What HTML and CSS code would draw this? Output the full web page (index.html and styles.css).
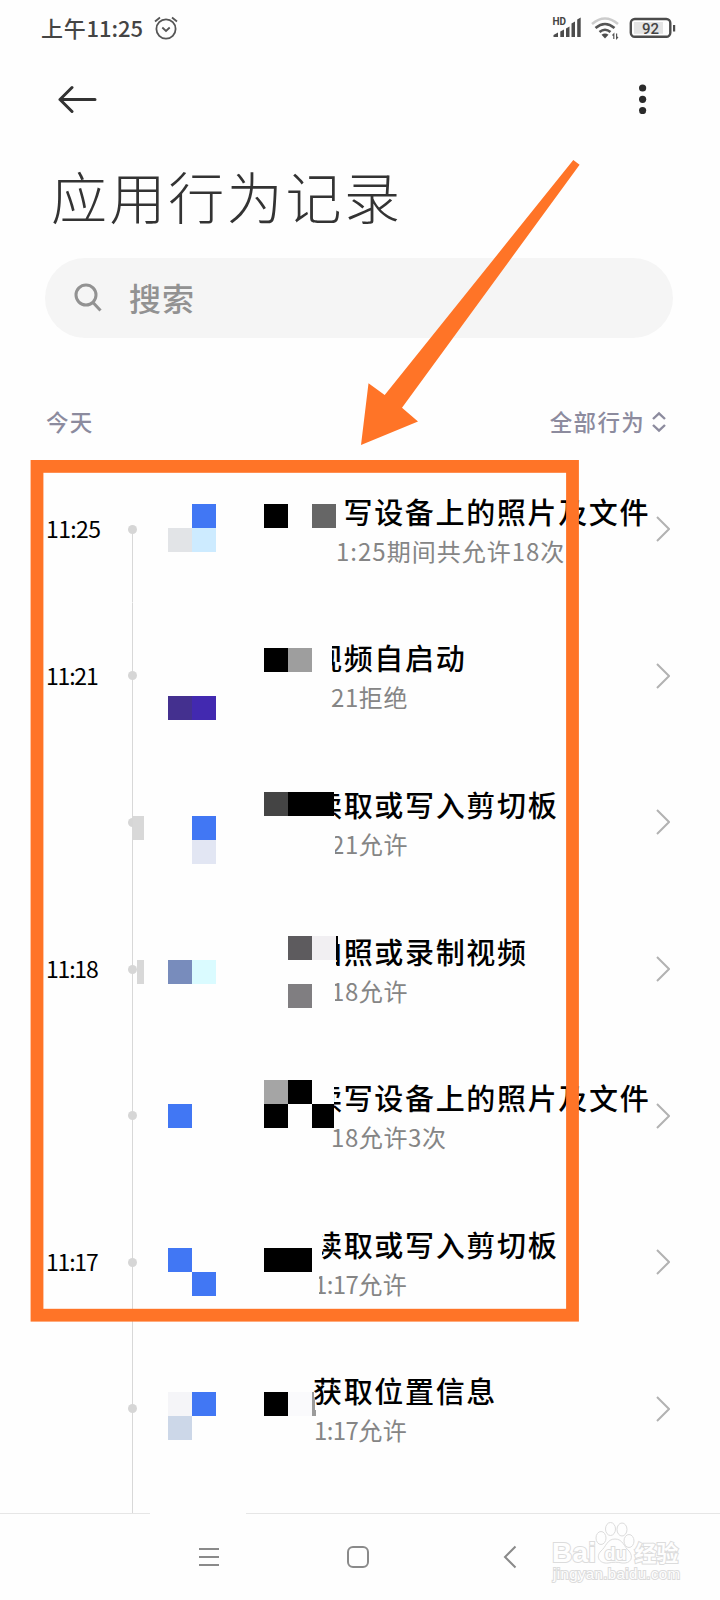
FILE: index.html
```html
<!DOCTYPE html>
<html lang="zh-CN">
<head>
    <meta charset="UTF-8">
    <meta name="viewport" content="width=device-width, initial-scale=1.0">
    <title>应用行为记录</title>
    <link rel="stylesheet" href="styles.css">
</head>
<body>
    <div class="phone">
        <div class="status-bar">
            <span class="clock">上午<span class="digits">11:25</span></span>
            <svg class="alarm" width="24" height="24" viewBox="0 0 24 24">
                <circle cx="12" cy="13" r="9.6"/>
                <path d="M1 5.5 L6 1.5 M23 5.5 L18 1.5 M8.3 11.5 L12 15 L15.7 11.5"/>
            </svg>
            <svg class="signals" width="126" height="26" viewBox="0 0 126 26">
                <text x="0.5" y="9.5" class="hd">HD</text>
                <path class="fill" d="M1.5 22 V20 L6 17.5 V22 Z M8.3 16.5 L12 14.5 V22 H8.3 Z M14 13.5 L17.5 11.5 V22 H14 Z M19.5 8.5 L23 6.5 V22 H19.5 Z M25.2 4.5 L28.7 2.5 V22 H25.2 Z"/>
                <path class="wifi faint" d="M40 9 Q53 -2 66 9"/>
                <path class="wifi" d="M43.5 13 Q53 5 62.5 13 M47.5 17 Q53 12.5 58.5 17"/>
                <path class="fill" d="M49.5 19.8 Q53 17 56.5 19.8 L53 23.5 Z"/>
                <path class="thin" d="M61.8 24 V19 L60.5 20.5 M64.6 18.5 V23.5 L66 22"/>
                <rect class="battery" x="78.8" y="4" width="39.5" height="17.8" rx="4"/>
                <rect class="level" x="82" y="7" width="29" height="11.8"/>
                <rect class="fill" x="121" y="10" width="2.2" height="6.5"/>
                <text x="90" y="18.5" class="percent">92</text>
            </svg>
        </div>

        <div class="toolbar">
            <svg width="40" height="30" viewBox="0 0 40 30">
                <path d="M14 3.5 L2 15.5 L14 27.5 M2 15.5 H37"/>
            </svg>
            <svg class="more" width="8" height="30" viewBox="0 0 8 30">
                <circle cx="3.6" cy="4" r="3.6"/>
                <circle cx="3.6" cy="15.3" r="3.6"/>
                <circle cx="3.6" cy="26.6" r="3.6"/>
            </svg>
        </div>

        <h1>应用行为记录</h1>

        <div class="search">
            <svg width="28" height="30" viewBox="0 0 28 30">
                <circle cx="12" cy="12" r="10"/>
                <path d="M19 19.5 L26.5 27.5"/>
            </svg>
            <span>搜索</span>
        </div>

        <div class="filter">
            <span>今天</span>
            <span class="all">全部行为</span>
            <svg width="16" height="22" viewBox="0 0 16 22">
                <path d="M2 8 L8 2.3 L14 8 M2 14 L8 19.7 L14 14"/>
            </svg>
        </div>

        <div class="list">
            <div class="row first">
                <span class="time">11:25</span>
                <div class="rail"><i></i></div>
                <div class="info">
                    <div class="name short">写设备上的照片及文件</div>
                    <div class="detail wide">1:25期间共允许18次</div>
                </div>
                <svg class="go" width="14" height="26" viewBox="0 0 14 26"><path d="M1 1 L13 13 L1 25"/></svg>
            </div>
            <div class="row launch">
                <span class="time narrow">11:21</span>
                <div class="rail"><i></i></div>
                <div class="info">
                    <div class="name">视频自启动</div>
                    <div class="detail">21拒绝</div>
                </div>
                <svg class="go" width="14" height="26" viewBox="0 0 14 26"><path d="M1 1 L13 13 L1 25"/></svg>
            </div>
            <div class="row clip">
                <span class="time"></span>
                <div class="rail"><i></i></div>
                <div class="info">
                    <div class="name">读取或写入剪切板</div>
                    <div class="detail">21允许</div>
                </div>
                <svg class="go" width="14" height="26" viewBox="0 0 14 26"><path d="M1 1 L13 13 L1 25"/></svg>
            </div>
            <div class="row camera">
                <span class="time narrow">11:18</span>
                <div class="rail"><i></i></div>
                <div class="info">
                    <div class="name">拍照或录制视频</div>
                    <div class="detail">18允许</div>
                </div>
                <svg class="go" width="14" height="26" viewBox="0 0 14 26"><path d="M1 1 L13 13 L1 25"/></svg>
            </div>
            <div class="row files">
                <span class="time"></span>
                <div class="rail"><i></i></div>
                <div class="info">
                    <div class="name">读写设备上的照片及文件</div>
                    <div class="detail">18允许3次</div>
                </div>
                <svg class="go" width="14" height="26" viewBox="0 0 14 26"><path d="M1 1 L13 13 L1 25"/></svg>
            </div>
            <div class="row paste">
                <span class="time narrow">11:17</span>
                <div class="rail"><i></i></div>
                <div class="info">
                    <div class="name">读取或写入剪切板</div>
                    <div class="detail long"><span>1:17</span>允许</div>
                </div>
                <svg class="go" width="14" height="26" viewBox="0 0 14 26"><path d="M1 1 L13 13 L1 25"/></svg>
            </div>
            <div class="row">
                <span class="time"></span>
                <div class="rail"><i></i></div>
                <div class="info">
                    <div class="name">获取位置信息</div>
                    <div class="detail long"><span>1:17</span>允许</div>
                </div>
                <svg class="go" width="14" height="26" viewBox="0 0 14 26"><path d="M1 1 L13 13 L1 25"/></svg>
            </div>
            <div class="row tail">
                <span class="time"></span>
                <div class="rail"></div>
            </div>
        </div>

        <div class="divider"><span></span><span></span></div>

        <div class="nav-bar">
            <svg width="20" height="22" viewBox="0 0 20 22"><path d="M0 3 H20 M0 11 H20 M0 19 H20"/></svg>
            <svg class="home" width="24" height="24" viewBox="0 0 24 24"><rect x="2" y="2" width="20" height="20" rx="5"/></svg>
            <svg width="14" height="24" viewBox="0 0 14 24"><path d="M12.5 1.5 L2 12 L12.5 22.5"/></svg>
        </div>

        <!-- mosaic blocks, frame, arrow and watermark -->
        <svg class="marks" width="720" height="1600" viewBox="0 0 720 1600">
            <g class="mosaic">
                <rect x="192" y="504" width="24" height="24" fill="#4177f4"/>
                <rect x="168" y="528" width="24" height="24" fill="#e2e4e7"/>
                <rect x="192" y="528" width="24" height="24" fill="#cdebff"/>
                <rect x="264" y="504" width="24" height="24" fill="#000"/>
                <rect x="312" y="504" width="24" height="24" fill="#666"/>

                <rect x="168" y="696" width="24" height="24" fill="#44308f"/>
                <rect x="192" y="696" width="24" height="24" fill="#4229b0"/>
                <rect x="264" y="648" width="24" height="24" fill="#000"/>
                <rect x="288" y="648" width="24" height="24" fill="#9e9e9e"/>

                <rect x="133" y="816" width="11" height="24" fill="#d8d8d8"/>
                <rect x="192" y="816" width="24" height="24" fill="#4177f4"/>
                <rect x="192" y="840" width="24" height="24" fill="#e2e6f3"/>
                <rect x="264" y="792" width="24" height="24" fill="#444"/>
                <rect x="288" y="792" width="46" height="24" fill="#000"/>

                <rect x="137" y="960" width="7" height="24" fill="#d8d8d8"/>
                <rect x="168" y="960" width="24" height="24" fill="#788cbc"/>
                <rect x="192" y="960" width="24" height="24" fill="#dafbff"/>
                <rect x="288" y="936" width="24" height="24" fill="#5d5b5e"/>
                <rect x="312" y="936" width="24" height="24" fill="#f1eff2"/>
                <rect x="336" y="936" width="2" height="24" fill="#000"/>
                <rect x="288" y="984" width="24" height="24" fill="#807e81"/>

                <rect x="168" y="1104" width="24" height="24" fill="#4177f4"/>
                <rect x="264" y="1080" width="24" height="24" fill="#a5a5a5"/>
                <rect x="288" y="1080" width="24" height="24" fill="#000"/>
                <rect x="264" y="1104" width="24" height="24" fill="#000"/>
                <rect x="312" y="1104" width="22" height="24" fill="#000"/>

                <rect x="168" y="1248" width="24" height="24" fill="#4177f4"/>
                <rect x="192" y="1272" width="24" height="24" fill="#4177f4"/>
                <rect x="264" y="1248" width="48" height="24" fill="#000"/>

                <rect x="168" y="1392" width="24" height="24" fill="#f5f5f8"/>
                <rect x="192" y="1392" width="24" height="24" fill="#4177f4"/>
                <rect x="168" y="1416" width="24" height="24" fill="#ccd7e8"/>
                <rect x="264" y="1392" width="24" height="24" fill="#000"/>
                <rect x="288" y="1392" width="24" height="24" fill="#fafafc"/>
                <path d="M312 1392 H314 L316 1416 H312 Z" fill="#9b9b9b"/>
            </g>
            <rect class="frame" x="37" y="466.4" width="535.5" height="848.8"/>
            <path class="arrow" d="M573.3 160 L579.6 164.7 L402 407.7 L418 421.5 L361 445 L368.5 383.3 L384.7 395 Z"/>
            <g class="watermark">
                <text x="552" y="1562" class="brand" textLength="44">Bai</text>
                <ellipse cx="601" cy="1538" rx="5" ry="6.5"/>
                <ellipse cx="610.5" cy="1529" rx="5" ry="6.5"/>
                <ellipse cx="622" cy="1529.5" rx="5" ry="6.5"/>
                <ellipse cx="629" cy="1541" rx="5" ry="6.5"/>
                <path d="M615 1539 C607 1539 606 1547 601 1551 C595 1557 600 1564 608 1563 C613 1562 618 1562 622 1563 C631 1564 634 1557 629 1551 C624 1547 623 1539 615 1539 Z"/>
                <text x="604.5" y="1559.5" class="du">du</text>
                <text x="634.5" y="1560.5" class="cn">经验</text>
                <text x="553" y="1579" class="url" textLength="127">jingyan.baidu.com</text>
            </g>
        </svg>
    </div>
</body>
</html>
```

FILE: styles.css
```css
/* Base styles */
* {
    box-sizing: border-box;
}

body {
    margin: 0;
    background: #fefefe;
    font-family: 'Noto Sans CJK SC', sans-serif;
    color: #000;
}

svg {
    display: block;
    fill: none;
}

.phone {
    position: relative;
    width: 720px;
    height: 1600px;
    overflow: hidden;
}

/* Status bar */
.status-bar {
    height: 56px;
    padding: 0 43px 0 41px;
    display: flex;
    align-items: center;
}

.clock {
    margin-top: -3px;
    font-size: 22px;
    font-weight: 500;
    letter-spacing: 0.8px;
    color: #444;
}

.digits {
    letter-spacing: -0.1px;
}

.alarm {
    margin-left: 11px;
    stroke: #555;
    stroke-width: 1.8;
}

.signals {
    margin-left: auto;
    margin-right: -1px;
}

.signals .fill {
    fill: #4c4c4c;
}

.signals text {
    fill: #444;
    font-family: Roboto, sans-serif;
}

.hd {
    font-size: 10px;
    font-weight: 700;
}

.percent {
    font-size: 15px;
    font-weight: 500;
}

.wifi {
    stroke: #555;
    stroke-width: 2.6;
}

.faint {
    stroke: #ccc;
}

.thin {
    stroke: #555;
    stroke-width: 1.2;
}

.battery {
    stroke: #4c4c4c;
    stroke-width: 2.4;
}

.level {
    fill: #e4e4e4;
}

/* Header */
.toolbar {
    height: 86px;
    padding: 0 73px 0 58px;
    display: flex;
    align-items: center;
    justify-content: space-between;
    stroke: #333;
    stroke-width: 3;
    stroke-linecap: round;
    stroke-linejoin: round;
}

.more {
    fill: #2b2b2b;
    stroke: none;
}

h1 {
    height: 116px;
    margin: 0;
    padding-left: 51px;
    font-size: 56px;
    font-weight: 300;
    line-height: 105px;
    letter-spacing: 2.6px;
    color: #333;
}

.search {
    height: 80px;
    margin: 0 47px 0 45px;
    padding-left: 29px;
    border-radius: 40px;
    background: #f5f5f5;
    display: flex;
    align-items: center;
    gap: 27px;
    font-size: 32px;
    letter-spacing: 1px;
    color: #929292;
}

.search span {
    margin-top: -3px;
    font-weight: 500;
}

.search svg {
    stroke: #929292;
    stroke-width: 3;
}

.filter {
    height: 118px;
    padding: 67px 53px 0 46px;
    display: flex;
    align-items: flex-start;
    font-size: 22.5px;
    font-weight: 500;
    line-height: 32px;
    letter-spacing: 1.3px;
    color: #8c8b9e;
}

.all {
    margin-left: auto;
}

.filter svg {
    margin: 6px 0 0 6px;
    stroke: #8c8b9e;
    stroke-width: 2.4;
}

/* Timeline */
.row {
    height: 146.6px;
    padding: 0 50px 0 46px;
    display: grid;
    grid-template-columns: 74px 24px minmax(0, 1fr) 14px;
    align-items: center;
}

.time {
    margin-top: -2px;
    font-size: 23px;
    letter-spacing: -0.6px;
}

.time.narrow {
    letter-spacing: -1.2px;
}

.rail {
    height: 100%;
    display: flex;
    align-items: center;
    justify-content: center;
    background: linear-gradient(#d8d8d8, #d8d8d8) 12px 0 / 1px 100% no-repeat;
}

.rail i {
    width: 9px;
    height: 9px;
    border-radius: 50%;
    background: #d6d6d6;
}

.first .rail {
    background-size: 1px 50%;
    background-position: 12px bottom;
}

.info {
    padding-top: 3px;
    white-space: nowrap;
}

.name {
    width: 400px;
    margin-left: 169px;
    font-size: 29px;
    font-weight: 500;
    line-height: 39px;
    letter-spacing: 1.67px;
}

.name.short {
    width: 340px;
    margin-left: 199.5px;
}

.detail {
    margin-left: 187px;
    font-size: 24px;
    font-weight: 400;
    line-height: 39px;
    letter-spacing: 0.6px;
    color: #858585;
}

.detail.wide {
    margin-left: 192px;
    letter-spacing: 1px;
}

.detail.long {
    margin-left: 170px;
}

.long span {
    letter-spacing: -0.6px;
}

/* names cut off on the left by the mosaic */
.launch .name {
    clip-path: inset(0 0 0 19px);
}

.clip .name,
.files .name {
    clip-path: inset(0 0 0 21px);
}

.camera .name {
    clip-path: inset(0 0 0 23px);
}

.paste .name {
    clip-path: inset(0 0 0 9px);
}

.clip .detail,
.camera .detail {
    clip-path: inset(0 0 0 4px);
}

.paste .detail {
    clip-path: inset(0 0 0 5px);
}

.go {
    stroke: #b2b2b2;
    stroke-width: 2;
}

.tail {
    height: 31px;
}

/* Bottom navigation */
.divider {
    height: 1px;
    display: flex;
    gap: 96px;
}

.divider span {
    width: 150px;
    background: #e6e6e6;
}

.divider span + span {
    width: 474px;
}

.nav-bar {
    height: 86px;
    padding: 0 203px 0 199px;
    display: flex;
    align-items: center;
    justify-content: space-between;
    stroke: #8a8a8a;
    stroke-width: 2;
}

.home {
    margin-right: 6px;
}

/* Annotations */
.marks {
    position: absolute;
    top: 0;
    left: 0;
}

.mosaic {
    shape-rendering: crispEdges;
}

.frame {
    stroke: #ff7427;
    stroke-width: 12.8;
}

.arrow {
    fill: #ff7427;
}

.watermark {
    fill: #fefefe;
    stroke: #dcdcdc;
    stroke-width: 1;
    font-family: 'Liberation Sans', 'Noto Sans CJK SC', sans-serif;
}

.watermark text {
    paint-order: stroke;
    stroke-width: 2;
}

.brand {
    font-size: 28px;
    font-weight: 700;
}

.du {
    font-size: 18px;
    font-weight: 700;
}

.cn {
    font-size: 22px;
    font-weight: 700;
}

.url {
    font-size: 15px;
}
```
